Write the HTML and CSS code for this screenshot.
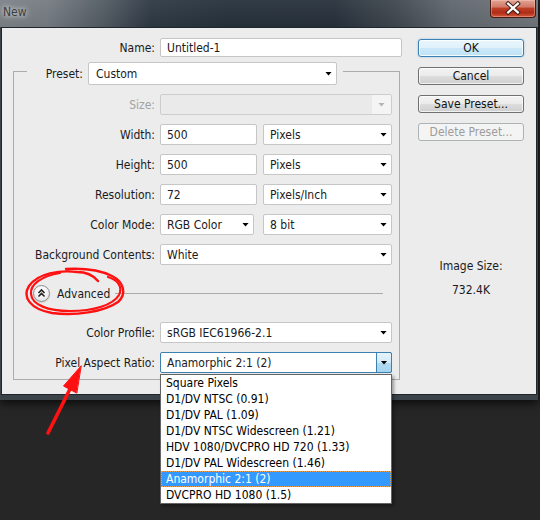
FILE: index.html
```html
<!DOCTYPE html>
<html>
<head>
<meta charset="utf-8">
<title>New</title>
<link rel="stylesheet" href="styles.css">
</head>
<body>
<div class="window">
  <div class="titlebar">
    <span class="title">New</span>
    <div class="close">
      <svg width="46" height="18" viewBox="0 0 46 18">
        <path d="M18.5 3.5 L28.5 12.5 M28.5 3.5 L18.5 12.5" stroke="#3a1a14" stroke-width="4.2" stroke-linecap="square" fill="none"/>
        <path d="M18.5 3.5 L28.5 12.5 M28.5 3.5 L18.5 12.5" stroke="#ffffff" stroke-width="2.2" stroke-linecap="square" fill="none"/>
      </svg>
    </div>
  </div>
  <div class="client">
    <div class="main">
      <div class="row name-row">
        <span class="lbl">Name:</span>
        <div class="input name">Untitled-1</div>
      </div>
      <div class="group">
        <div class="group-head">
          <span class="lbl">Preset:</span>
          <div class="select preset"><span class="val">Custom</span><span class="arr"></span></div>
        </div>
        <div class="rows">
          <div class="row">
            <span class="lbl disabled">Size:</span>
            <div class="select w-full off"><span class="val"></span><span class="arr"></span></div>
          </div>
          <div class="row">
            <span class="lbl">Width:</span>
            <div class="input w-num">500</div>
            <div class="select w-unit"><span class="val">Pixels</span><span class="arr"></span></div>
          </div>
          <div class="row">
            <span class="lbl">Height:</span>
            <div class="input w-num">500</div>
            <div class="select w-unit"><span class="val">Pixels</span><span class="arr"></span></div>
          </div>
          <div class="row">
            <span class="lbl">Resolution:</span>
            <div class="input w-num">72</div>
            <div class="select w-unit"><span class="val">Pixels/Inch</span><span class="arr"></span></div>
          </div>
          <div class="row">
            <span class="lbl">Color Mode:</span>
            <div class="select w-mode"><span class="val">RGB Color</span><span class="arr"></span></div>
            <div class="select w-unit w-bit"><span class="val">8 bit</span><span class="arr"></span></div>
          </div>
          <div class="row">
            <span class="lbl">Background Contents:</span>
            <div class="select w-full"><span class="val">White</span><span class="arr"></span></div>
          </div>
          <div class="adv">
            <span class="adv-btn">
              <svg width="17" height="17" viewBox="0 0 17 17">
                <path d="M5.5 8 L8.5 5 L11.5 8 M5.5 11.5 L8.5 8.5 L11.5 11.5" stroke="#222" stroke-width="1.6" fill="none"/>
              </svg>
            </span>
            <span class="adv-text">Advanced</span>
            <span class="adv-line"></span>
          </div>
          <div class="row">
            <span class="lbl">Color Profile:</span>
            <div class="select w-full"><span class="val">sRGB IEC61966-2.1</span><span class="arr"></span></div>
          </div>
          <div class="row">
            <span class="lbl">Pixel Aspect Ratio:</span>
            <div class="select w-full focus">
              <span class="val">Anamorphic 2:1 (2)</span><span class="arr"></span>
              <div class="list">
                <div class="opt">Square Pixels</div>
                <div class="opt">D1/DV NTSC (0.91)</div>
                <div class="opt">D1/DV PAL (1.09)</div>
                <div class="opt">D1/DV NTSC Widescreen (1.21)</div>
                <div class="opt">HDV 1080/DVCPRO HD 720 (1.33)</div>
                <div class="opt">D1/DV PAL Widescreen (1.46)</div>
                <div class="opt sel">Anamorphic 2:1 (2)</div>
                <div class="opt">DVCPRO HD 1080 (1.5)</div>
              </div>
            </div>
          </div>
        </div>
      </div>
    </div>
    <div class="side">
      <div class="btn ok">OK</div>
      <div class="btn">Cancel</div>
      <div class="btn">Save Preset...</div>
      <div class="btn off">Delete Preset...</div>
      <div class="isize">Image Size:</div>
      <div class="ival">732.4K</div>
    </div>
  </div>
</div>
<svg class="annot" width="540" height="520" viewBox="0 0 540 520">
  <g stroke="#ff1111" fill="none" stroke-linecap="round" stroke-linejoin="round">
    <path stroke-width="2.4" d="M98 281 C93 275 86 272 77 272 C60 270 38 273 29 286 C22 297 30 309 52 313 C75 316 104 312 118 302 C127 294 124 282 112 276 C100 270 84 268 66 269"/>
    <path stroke-width="2.2" d="M60 273 C42 276 30 284 31 294 C32 305 48 311 70 311 C94 311 113 305 119 295 C123 287 118 280 108 277"/>
    <path stroke-width="3.6" d="M48 433 L70 389"/>
    <polygon fill="#ff1111" stroke-width="1" points="81,366 63.5,386 76.5,393"/>
  </g>
</svg>
</body>
</html>
```
FILE: styles.css
```css
* { box-sizing: border-box; }
html, body { margin: 0; padding: 0; }
body {
  width: 540px;
  height: 520px;
  overflow: hidden;
  position: relative;
  background: #262626;
  font-family: "DejaVu Sans Condensed", "DejaVu Sans", sans-serif;
  font-stretch: condensed;
  font-size: 12px;
  color: #1a1a22;
}

.window {
  width: 538px;
  background: #3b4248;
  padding-bottom: 5px;
  box-shadow: 0 3px 9px rgba(0, 0, 0, 0.75);
  position: relative;
}

.titlebar {
  height: 27px;
  display: flex;
  align-items: flex-start;
  background:
    linear-gradient(180deg, rgba(255,255,255,0.06), rgba(0,0,0,0.04)),
    linear-gradient(90deg, #7c8187 0%, #747a80 9%, #525b63 19%, #2d3843 28%, #25303a 42%, #26303a 62%, #3d454d 73%, #5f666d 84%, #6f757a 100%);
}
.title {
  margin: 4px 0 0 3px;
  line-height: 16px;
  color: #3b3d40;
  text-shadow: 0 0 4px #d4d6d8, 0 0 7px #c8cbce;
}
.close {
  margin-left: auto;
  margin-right: 2px;
  width: 46px;
  height: 18px;
  border: 1px solid #4a1a12;
  border-top: none;
  border-radius: 0 0 4px 4px;
  background: linear-gradient(180deg, #e2a395 0%, #d27a68 40%, #bd3e26 50%, #b02c17 75%, #d65a3c 100%);
  box-shadow: inset 0 0 0 1px rgba(255, 220, 210, 0.35);
  display: flex;
  align-items: center;
  justify-content: center;
}
.close svg { display: block; margin-left: -1px; }

.client {
  margin: 0 1px;
  height: 368px;
  border: 1px solid #1f262d;
  background: #ececec;
  display: flex;
  align-items: flex-start;
}

.main { width: 400px; padding-top: 10px; }

.row { display: flex; align-items: center; gap: 5px; }
.lbl { text-align: right; white-space: nowrap; flex: none; }
.lbl.disabled { color: #a3a3a3; }
.name-row .lbl { width: 153px; }

.input, .select {
  height: 21px;
  border: 1px solid #c6c6c6;
  border-radius: 2px;
  background: #fff;
  line-height: 20px;
  padding-left: 6px;
  white-space: nowrap;
  flex: none;
}
.name { width: 242px; height: 19px; line-height: 18px; }

.select { display: flex; align-items: stretch; position: relative; }
.select .val { flex: 1; }
.select .arr {
  width: 15px;
  display: flex;
  align-items: center;
  justify-content: center;
}
.select .arr::after {
  content: "";
  width: 7px;
  height: 4px;
  background: #000;
  clip-path: polygon(0 0, 100% 0, 50% 100%);
}
.select.off { background: #eaeaea; border-color: #cdcdcd; }
.select.off .arr { width: 19px; background: #f4f4f4; }
.select.off .arr::after { background: #b4b4b4; }

.select.focus { border-color: #3c7fb1; }
.select.focus .arr {
  width: 16px;
  margin: -1px -1px -1px 0;
  border: 1px solid #3c7fb1;
  border-radius: 0 2px 2px 0;
  background: linear-gradient(180deg, #e6f4fc 0%, #d2eaf8 50%, #b3dbf3 51%, #a4d3f0 100%);
}

.group {
  margin: 14px 0 0 11px;
  width: 387px;
  border: 1px solid #acacac;
  padding-bottom: 6px;
}
.group-head {
  display: flex;
  align-items: center;
  margin: -10px 0 0 13px;
  width: 316px;
  height: 23px;
  background: #ececec;
}
.group-head .lbl { width: 61px; padding-right: 5px; }
.preset { width: 249px; height: 23px; line-height: 22px; padding-left: 7px; }

.rows { margin-top: 9px; display: flex; flex-direction: column; gap: 9px; }
.rows .row .lbl { width: 141px; }
.w-full { width: 232px; }
.w-num { width: 97px; }
.w-unit { width: 129px; margin-left: 1px; }
.w-mode { width: 94px; }
.w-bit { margin-left: 4px; }

.adv {
  height: 39px;
  display: flex;
  align-items: center;
  padding-left: 19px;
}
.adv-btn {
  width: 17px;
  height: 17px;
  border-radius: 50%;
  border: 1px solid #8c8e90;
  background: radial-gradient(circle at 50% 35%, #ffffff 0%, #f3f3f3 50%, #d4d4d4 100%);
  box-shadow: 0 1px 1px rgba(0, 0, 0, 0.12);
  display: flex;
  align-items: center;
  justify-content: center;
  flex: none;
}
.adv-btn svg { display: block; margin: -1px; }
.adv-text { margin-left: 7px; }
.adv-line {
  flex: 1;
  height: 0;
  border-top: 1px solid #aaaaaa;
  margin: 0 16px 0 5px;
}

.list {
  position: absolute;
  left: -1px;
  top: 100%;
  width: 232px;
  border: 1px solid #646464;
  background: #fff;
  z-index: 5;
  box-shadow: 2px 2px 3px rgba(0, 0, 0, 0.35);
  margin-top: 2px;
}
.opt {
  height: 16px;
  line-height: 17px;
  padding-left: 5px;
  color: #000;
  white-space: nowrap;
}
.opt.sel {
  background: #3399ff;
  color: #fff;
  outline: 1px dotted #e8a050;
  outline-offset: -1px;
}

.side {
  margin-left: 16px;
  width: 106px;
  padding-top: 11px;
  display: flex;
  flex-direction: column;
}
.btn {
  height: 18px;
  margin-bottom: 10px;
  border: 1px solid #707070;
  border-radius: 3px;
  background: linear-gradient(180deg, #f3f3f3 0%, #ebebeb 50%, #dddddd 51%, #cfcfcf 100%);
  box-shadow: inset 0 0 0 1px rgba(255, 255, 255, 0.7);
  text-align: center;
  line-height: 17px;
  color: #111;
}
.btn.ok {
  border-color: #3c7fb1;
  background: linear-gradient(180deg, #eaf6fd 0%, #dff1fb 50%, #cbe8f9 51%, #bfe2f6 100%);
  box-shadow: inset 0 0 0 1px rgba(255, 255, 255, 0.8), 0 0 2px rgba(60, 160, 230, 0.6);
}
.btn.off {
  border-color: #adb2b5;
  background: #f4f4f4;
  box-shadow: none;
  color: #9c9c9c;
}
.isize { margin-top: 108px; text-align: center; line-height: 14px; }
.ival { margin-top: 10px; text-align: center; line-height: 14px; }

.annot {
  position: absolute;
  left: 0;
  top: 0;
  pointer-events: none;
  z-index: 10;
}
```
